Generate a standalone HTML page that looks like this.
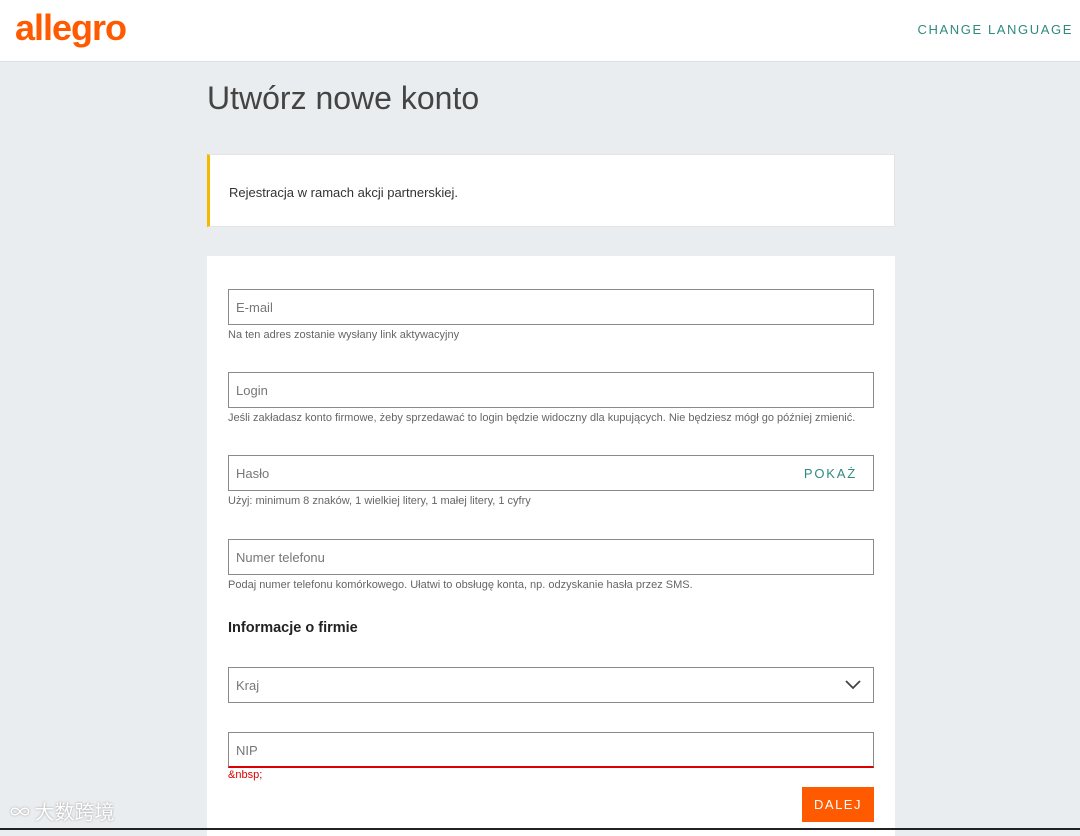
<!DOCTYPE html><html><head><meta charset="utf-8"><style>
*{box-sizing:border-box;margin:0;padding:0}
body{width:1080px;height:830px;overflow:hidden;background:#eaedf0;font-family:"Liberation Sans",sans-serif;position:relative}
.hdr{position:absolute;left:0;top:0;width:1080px;height:62px;background:#fff;border-bottom:1px solid #dde0e3}
.logo{position:absolute;left:15px;top:7px;font-size:36px;color:#ff5a00;font-weight:bold;letter-spacing:-1px}
.cl{position:absolute;right:7px;top:22px;font-size:13px;letter-spacing:1.6px;color:#2f8a7f}
h1{position:absolute;left:207px;top:80px;font-size:32px;font-weight:normal;color:#444}
.note{position:absolute;left:207px;top:154px;width:688px;height:73px;background:#fff;border:1px solid #e2e4e6;border-left:3px solid #f5b800;font-size:13px;color:#333;padding:30px 0 0 19px}
.card{position:absolute;left:207px;top:256px;width:688px;height:580px;background:#fff}
.in{position:absolute;left:228px;width:646px;height:36px;border:1px solid #8a8a8a;font-size:13px;color:#777;padding:10px 0 0 7px}
.h{position:absolute;left:228px;font-size:11px;color:#666}
.b{position:absolute;left:228px;top:620px;font-size:14.5px;font-weight:bold;color:#222}
.btn{position:absolute;left:802px;top:787px;width:72px;height:35px;background:#ff5a00;color:#fff;font-size:13px;letter-spacing:1.5px;text-align:center;line-height:35px}
</style></head><body>
<div class="hdr"><div class="logo">allegro</div><div class="cl">CHANGE LANGUAGE</div></div>
<h1>Utwórz nowe konto</h1>
<div class="note">Rejestracja w ramach akcji partnerskiej.</div>
<div class="card"></div>
<div class="in" style="top:289px">E-mail</div>
<div class="h" style="top:329px">Na ten adres zostanie wysłany link aktywacyjny</div>
<div class="in" style="top:372px">Login</div>
<div class="h" style="top:412px">Jeśli zakładasz konto firmowe, żeby sprzedawać to login będzie widoczny dla kupujących. Nie będziesz mógł go później zmienić.</div>
<div class="in" style="top:455px">Hasło<span style="position:absolute;right:16px;top:10px;color:#2f8a7f;letter-spacing:1.8px">POKAŻ</span></div>
<div class="h" style="top:495px">Użyj: minimum 8 znaków, 1 wielkiej litery, 1 małej litery, 1 cyfry</div>
<div class="in" style="top:539px">Numer telefonu</div>
<div class="h" style="top:579px">Podaj numer telefonu komórkowego. Ułatwi to obsługę konta, np. odzyskanie hasła przez SMS.</div>
<div class="b">Informacje o firmie</div>
<div class="in" style="top:667px">Kraj<svg style="position:absolute;right:12px;top:12px" width="16" height="10" viewBox="0 0 16 10"><path d="M1 1l7 7 7-7" fill="none" stroke="#444" stroke-width="1.8"/></svg></div>
<div class="in" style="top:732px;border-bottom:2px solid #d00">NIP</div>
<div class="h" style="top:769px;color:#d00">&amp;nbsp;</div>
<div class="btn">DALEJ</div>
<div style="position:absolute;left:10px;top:796px;font-size:20px;color:#fff;font-family:'Noto Sans CJK SC',sans-serif;text-shadow:0 0 2px #999">∞ 大数跨境</div>
<div style="position:absolute;left:0;top:828px;width:1080px;height:2px;background:#222"></div>
</body></html>
